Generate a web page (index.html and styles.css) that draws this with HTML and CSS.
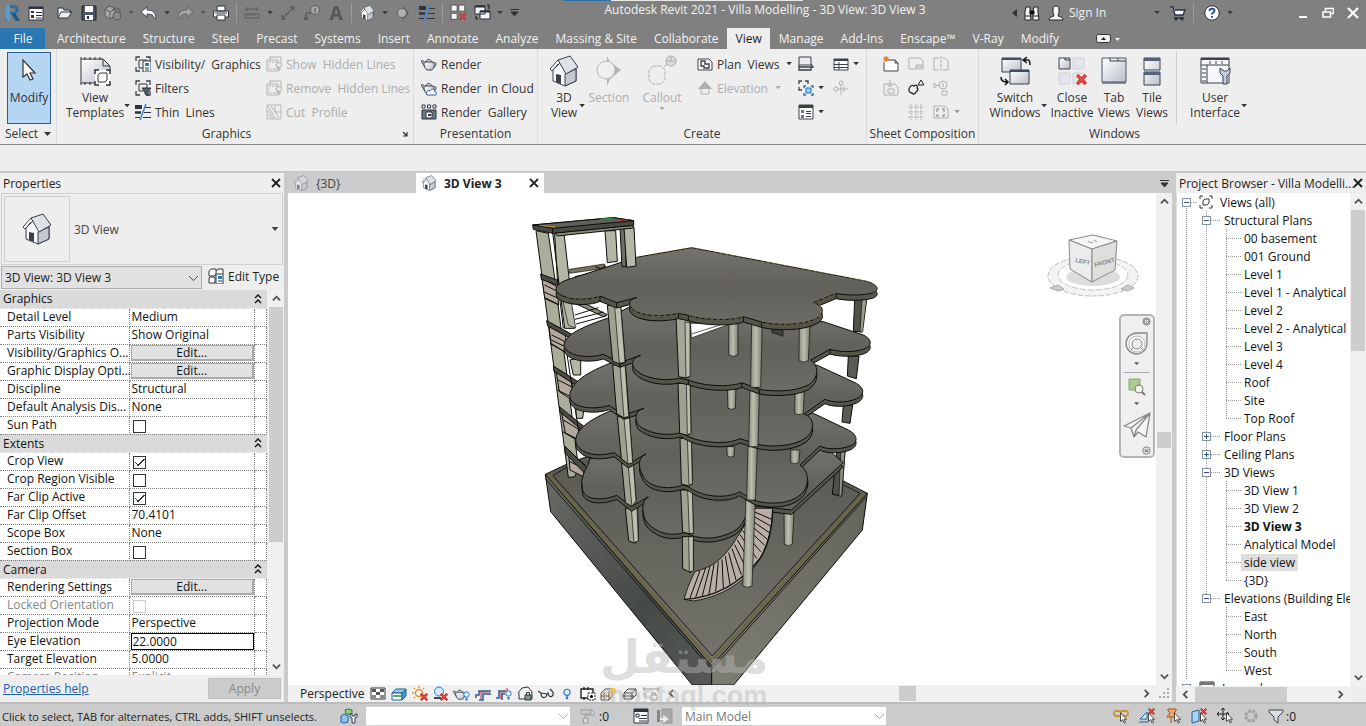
FILE: index.html
```html
<!DOCTYPE html>
<html lang="en">
<head>
<meta charset="utf-8">
<title>Autodesk Revit 2021 - Villa Modelling - 3D View: 3D View 3</title>
<link rel="stylesheet" href="styles.css">
</head>
<body>
<svg class="defs" width="0" height="0" aria-hidden="true">
  <defs>
    <linearGradient id="g-metal" x1="0" y1="0" x2="1" y2="1"><stop offset="0" stop-color="#fff"/><stop offset="1" stop-color="#b9bfca"/></linearGradient>
    <linearGradient id="g-slab" x1="0" y1="0" x2="0" y2="1"><stop offset="0" stop-color="#74736e"/><stop offset=".5" stop-color="#62605b"/><stop offset="1" stop-color="#6c6b66"/></linearGradient>
    <linearGradient id="g-floor" x1="0" y1="0" x2="0" y2="1"><stop offset="0" stop-color="#575650"/><stop offset="1" stop-color="#75746c"/></linearGradient>
    <linearGradient id="g-left" x1="0" y1="0" x2="1" y2="1"><stop offset="0" stop-color="#686a66"/><stop offset=".6" stop-color="#464a46"/><stop offset="1" stop-color="#565955"/></linearGradient>
    <linearGradient id="g-right" x1="1" y1="0" x2="0" y2="1"><stop offset="0" stop-color="#65645c"/><stop offset="1" stop-color="#7e7d72"/></linearGradient>
    <linearGradient id="g-cyl" x1="0" y1="0" x2="1" y2="0"><stop offset="0" stop-color="#8b8e7f"/><stop offset=".45" stop-color="#bcbfae"/><stop offset="1" stop-color="#7d8072"/></linearGradient>
    <symbol id="i-house" viewBox="0 0 30 32">
      <path d="M4 15v11l12 5 11-5V13L16 3z" fill="#fafafa" stroke="#3b404a"/>
      <path d="M16 19v12l11-5V14z" fill="#c3c8d1" stroke="#3b404a"/>
      <path d="M7 19l5 1v9l-5-2z" fill="#3b404a"/>
      <path d="M9 5l12-4 8 11-12 7z" fill="#dfe2e8" stroke="#3b404a" stroke-linejoin="round"/>
      <path d="M9 5L1 14l2 2 6-7" fill="#fff" stroke="#3b404a" stroke-linejoin="round"/>
    </symbol>
    <symbol id="i-crop" viewBox="0 0 16 16"><path d="M1 5V1h4M11 1h4v4M15 11v4h-4M5 15H1v-4" fill="none" stroke="#3b404a" stroke-width="1.3"/></symbol>
    <symbol id="i-thin" viewBox="0 0 16 16"><path d="M0 3h7" stroke="#2d3440" stroke-width="4"/><path d="M0 8.500h6" stroke="#2d3440" stroke-width="2.500"/><path d="M0 13.500h5M10 3.500h6M9 8.500h7M8 13.500h8" stroke="#2d3440" stroke-width="1.200"/><path d="M11 0L5 16" stroke="#3e84d8" stroke-width="1.500"/></symbol>
    <symbol id="i-hidden" viewBox="0 0 16 16"><path d="M1 4h11v11H1zM4 4V1h11v8" fill="none" stroke="#b4b4b4"/><path d="M3 6h7v7H3z" fill="none" stroke="#b4b4b4" stroke-dasharray="2 1"/><circle cx="13" cy="9" r="2.500" fill="#eee" stroke="#b4b4b4"/><path d="M12 11h2v3h-2z" fill="#ccc" stroke="#b4b4b4"/></symbol>
    <symbol id="i-teapot" viewBox="0 0 16 16"><path d="M3 6h9c2 3 1 6-1 8H6C3 12 3 9 3 6z" fill="url(#g-metal)" stroke="#3b404a"/><path d="M4 11L0 5h3M12 7c4-2 4 3 0 5M5 6c0-3 5-3 6 0M7.500 3v1" fill="none" stroke="#3b404a"/></symbol>
    <symbol id="i-windows" viewBox="0 0 32 32"><path d="M3 3h19v14H3z" fill="url(#g-metal)" stroke="#3b404a"/><path d="M3 3h19v2H3z" fill="#3b5068"/><path d="M11 15h19v14H11z" fill="url(#g-metal)" stroke="#3b404a"/><path d="M11 15h19v2H11z" fill="#3b5068"/><path d="M25 5h4q2 0 2 5M28 2l-4 3 4 3M2 22q0 5 6 5M6 24l3 3-3 3" fill="none" stroke="#111" stroke-width="1.500"/></symbol>
    <symbol id="i-redx" viewBox="0 0 10 10"><path d="M1 1l8 8M9 1L1 9" stroke="#c22a22" stroke-width="3"/><path d="M1.500 1.500l7 7M8.500 1.500l-7 7" stroke="#ee5a50" stroke-width="1.200"/></symbol>
    <symbol id="i-tiles" viewBox="0 0 32 32"><path d="M3 3h11v11H3z" fill="url(#g-metal)" stroke="#3b404a"/><path d="M9 3v2h5" stroke="#3b404a" fill="none"/><path d="M17 3h11v11H17zM3 18h11v11H3zM17 18h11v11H17z" fill="#e3e5ea" stroke="#cfd3da"/><use href="#i-redx" x="20" y="19" width="11" height="11"/></symbol>
    <symbol id="i-tri" viewBox="0 0 8 5"><path d="M0 0h7L3.500 4z" fill="currentColor"/></symbol>
    <symbol id="i-up" viewBox="0 0 10 10"><path d="M1 7l4-4 4 4" fill="none" stroke="#505050" stroke-width="2"/></symbol>
    <symbol id="i-down" viewBox="0 0 10 10"><path d="M1 3l4 4 4-4" fill="none" stroke="#505050" stroke-width="2"/></symbol>
    <symbol id="i-left" viewBox="0 0 10 10"><path d="M7 1L3 5l4 4" fill="none" stroke="#505050" stroke-width="2"/></symbol>
    <symbol id="i-right" viewBox="0 0 10 10"><path d="M3 1l4 4-4 4" fill="none" stroke="#505050" stroke-width="2"/></symbol>
    <symbol id="i-close" viewBox="0 0 10 10"><path d="M1 1l8 8M9 1L1 9" stroke="currentColor" stroke-width="1.800"/></symbol>
    <symbol id="i-cursor" viewBox="0 0 9 14"><path d="M1 1v10l2.500-2 2 4 1.500-1-2-3.500h3z" fill="#fff" stroke="#333"/></symbol>
    <symbol id="i-bulb" viewBox="0 0 7 10"><circle cx="3.500" cy="3.500" r="2.700" fill="#dff0ff" stroke="#2a78c2"/><path d="M2.500 7h2v2.500h-2z" fill="#2a78c2"/></symbol>
    <symbol id="i-fold" viewBox="0 0 8 10"><path d="M1 4l3-3 3 3M1 9l3-3 3 3" fill="none" stroke="#111" stroke-width="1.400"/></symbol>
  </defs>
</svg>

<header class="titlebar">
  <div class="qat-row">
    <div class="qat">
      <button class="q" aria-label="Revit"><svg width="18" height="18" viewBox="0 0 18 18"><path d="M3 1h8c6 0 6 8 1 9l4 7h-4L8 10H6v7H3l-1-3z" fill="#2f6ea5"/><path d="M3 1h4v16H4l-2-4z" fill="#5b9bd0"/><path d="M7 4h4c2 0 2 4 0 4H7z" fill="#808080"/><path d="M9 10l5 7h3l-5-8z" fill="#1b5388"/></svg></button>
      <button class="q" aria-label="Properties"><svg width="16" height="16"><path d="M1 2h14v13H1z" fill="#fff" stroke="#2d3440"/><path d="M1 2h14v2H1z" fill="#2d3440"/><path d="M3 6h3v2H3zM3 10h3v3H3z" fill="#2d3440"/><path d="M8 7.500h6M8 10.500h6M8 13h6" stroke="#2d3440"/></svg></button>
      <button class="q after-gap" aria-label="Open"><svg width="16" height="16"><path d="M1 12V3h5l1 2h6v3M1 13l3-6h11l-4 6z" fill="#eef0f4" stroke="#2d3440"/></svg></button>
      <button class="q" aria-label="Save"><svg width="16" height="16"><path d="M1 1h14v14H1z" fill="#4a5568" stroke="#222"/><path d="M4 1h8v6H4zM4 10h8v5H4z" fill="#fff"/><path d="M6 11h2v3H6z" fill="#2d3440"/></svg></button>
      <button class="q" aria-label="Synchronize"><svg width="18" height="16"><path d="M1 4l5-3 5 3v7l-5 3-5-3z" fill="#a5a5a5" stroke="#5c5c5c"/><path d="M1 4l5 3 5-3M6 7v7M8 5l4-2 4 2v5l-4 3" fill="none" stroke="#5c5c5c"/><circle cx="13" cy="11" r="4" fill="#8c8c8c" stroke="#5c5c5c"/></svg></button>
      <button class="qa dim" aria-label="Sync options"><svg width="7" height="4"><use href="#i-tri"/></svg></button>
      <button class="q" aria-label="Undo"><svg width="16" height="16"><path d="M0 7l6-5v3c6 0 9 3 9 9l-2-1c0-3-3-4-7-4v3z" fill="#fff" stroke="#2d3440" stroke-width=".8"/></svg></button>
      <button class="qa" aria-label="Undo list"><svg width="7" height="4"><use href="#i-tri"/></svg></button>
      <button class="q" aria-label="Redo"><svg width="16" height="16"><path d="M16 7l-6-5v3C4 5 1 8 1 14l2-1c0-3 3-4 7-4v3z" fill="#a8a8a8" stroke="#5c5c5c" stroke-width=".8"/></svg></button>
      <button class="qa dim" aria-label="Redo list"><svg width="7" height="4"><use href="#i-tri"/></svg></button>
      <button class="q" aria-label="Print"><svg width="16" height="16"><path d="M4 1h8v5H4zM0.500 6h15v6h-15z" fill="#fff" stroke="#2d3440"/><path d="M4 10h8v5H4z" fill="#fff" stroke="#2d3440"/><path d="M2 8h12" stroke="#2d3440"/></svg></button>
      <i class="qsep"></i>
      <button class="q" aria-label="Measure"><svg width="16" height="16"><path d="M1 4h14M3 2v4M13 2v4M1 9h14v4H1zM4 9v2M7 9v2M10 9v2" fill="none" stroke="#5c5c5c"/></svg></button>
      <button class="qa" aria-label="Measure options"><svg width="7" height="4"><use href="#i-tri"/></svg></button>
      <button class="q" aria-label="Aligned dimension"><svg width="16" height="16"><path d="M2 14L14 2M10 2h4v4M2 10v4h4" fill="none" stroke="#5c5c5c" stroke-width="1.300"/></svg></button>
      <button class="q" aria-label="Tag"><svg width="16" height="16"><circle cx="11" cy="5" r="4.500" fill="#a8a8a8" stroke="#5c5c5c"/><path d="M11 3v5M7 8H2v4" fill="none" stroke="#4c4c4c"/><path d="M0 12h4v3H0z" fill="#5c5c5c"/></svg></button>
      <button class="q letter" aria-label="Text">A</button>
      <i class="qsep"></i>
      <button class="q" aria-label="Default 3D view"><svg width="16" height="16"><use href="#i-house"/></svg></button>
      <button class="qa" aria-label="3D options"><svg width="7" height="4"><use href="#i-tri"/></svg></button>
      <button class="q" aria-label="Section"><svg width="16" height="16"><path d="M8 1l6 7-6 7z" fill="#5c5c5c"/><circle cx="7" cy="8" r="4.500" fill="#b0b0b0" stroke="#666"/></svg></button>
      <button class="q" aria-label="Thin lines"><svg width="16" height="16"><use href="#i-thin"/></svg></button>
      <i class="qsep"></i>
      <button class="q" aria-label="Close inactive views"><svg width="17" height="17" viewBox="1 1 31 31"><path d="M3 3h11v11H3zM17 3h11v11H17zM3 18h11v11H3z" fill="#f4f4f8" stroke="#444" stroke-width="1.500"/><use href="#i-redx" x="17" y="17" width="14" height="14"/></svg></button>
      <button class="q" aria-label="Switch windows"><svg width="17" height="17"><path d="M1 2h10v8H1zM6 7h10v8H6z" fill="#f4f4f8" stroke="#26303c"/><path d="M1 2.500h10M6 7.500h10" stroke="#26303c" stroke-width="2"/><path d="M13 1h2v4M2 12v3h2" fill="none" stroke="#111"/></svg></button>
      <button class="qa" aria-label="Window list"><svg width="7" height="4"><use href="#i-tri"/></svg></button>
      <button class="qa custom" aria-label="Customize"><svg width="9" height="7"><path d="M0 .5h9M1 3h7L4.500 7z" stroke="#333" fill="#333"/></svg></button>
    </div>
    <div class="app-title">Autodesk Revit 2021 - Villa Modelling - 3D View: 3D View 3</div>
    <div class="account">
      <button class="qa" aria-label="Collapse search"><svg width="5" height="8"><path d="M5 0v8L0 4z" fill="#333"/></svg></button>
      <button class="q" aria-label="Search"><svg width="16" height="16"><path d="M2 2h4v4l1 9H1V7zM10 2h4v5l1 8H9V6z" fill="#f2f2f2" stroke="#222"/><path d="M6 6h4v3H6zM1 11h6M9 11h6" stroke="#222"/></svg></button>
      <button class="signin"><svg width="16" height="16"><path d="M1 15c0-3 3-3 5-4l-1-3V4c0-4 6-4 6 0v4l-1 3c2 1 5 1 5 4z" fill="#f7f7f7" stroke="#222"/></svg><span>Sign In</span></button>
      <button class="qa" aria-label="Account menu"><svg width="7" height="4"><use href="#i-tri"/></svg></button>
      <button class="q cart" aria-label="App store"><svg width="17" height="16"><path d="M0 2h3l2 8h8l2-5H5M4 13h10" fill="#fff" stroke="#26304a" stroke-width="1.400"/><circle cx="6" cy="14" r="1.500" fill="#26304a"/><circle cx="12" cy="14" r="1.500" fill="#26304a"/></svg></button>
      <i class="qsep"></i>
      <button class="q help" aria-label="Help"><svg width="16" height="16"><circle cx="8" cy="8" r="7.200" fill="#fff" stroke="#333"/><path d="M5.500 6c0-3 5-3 5-.3C10.500 7.500 8 7.500 8 9.500M8 11v1.800" fill="none" stroke="#27509b" stroke-width="2"/></svg></button>
      <button class="qa" aria-label="Help menu"><svg width="7" height="4"><use href="#i-tri"/></svg></button>
      <div class="wm">
        <button aria-label="Minimize"><svg width="12" height="12"><path d="M2 10h8" stroke="#fff" stroke-width="2"/></svg></button>
        <button aria-label="Restore"><svg width="12" height="12"><path d="M3.500 4V1.500h8v5H9M1 5h7.500v5H1z" fill="none" stroke="#fff" stroke-width="1.500"/></svg></button>
        <button aria-label="Close"><svg width="12" height="12"><path d="M1 1l10 10M11 1L1 11" stroke="#fff" stroke-width="2.200"/></svg></button>
      </div>
    </div>
  </div>
  <nav class="tabs">
    <button class="tab file">File</button>
    <button class="tab">Architecture</button><button class="tab">Structure</button><button class="tab">Steel</button><button class="tab">Precast</button><button class="tab">Systems</button><button class="tab">Insert</button><button class="tab">Annotate</button><button class="tab">Analyze</button><button class="tab">Massing &amp; Site</button><button class="tab">Collaborate</button><button class="tab active">View</button><button class="tab">Manage</button><button class="tab">Add-Ins</button><button class="tab">Enscape™</button><button class="tab">V-Ray</button><button class="tab">Modify</button>
    <button class="tab mini" aria-label="Minimize ribbon"><svg width="26" height="10"><rect x=".5" y=".5" width="14" height="8" rx="2" fill="#f0f0f0" stroke="#333"/><path d="M5 6h5L7.500 3z" fill="#222"/><path d="M19 4h5l-2.500 3z" fill="#eee"/></svg></button>
  </nav>
</header>

<section class="ribbon" aria-label="View ribbon">
  <div class="panel p-select">
    <div class="body"><button class="big modify"><svg width="32" height="32"><path d="M10 5v17l4-3 3 6 3-1-3-6h5z" fill="#fff" stroke="#333" stroke-width="1.200"/></svg><span>Modify</span></button></div>
    <div class="name">Select <svg width="7" height="4"><path d="M0 0h7L3.500 4z" fill="#333"/></svg></div>
  </div>
  <div class="panel p-graphics">
    <div class="body">
      <button class="big"><svg width="32" height="32"><path d="M2 4h22l7 7v17H2z" fill="url(#g-metal)"/><path d="M2 2v28M2 4h22l7 7v5M24 4v7h7M2 28h13M6 2v3M11 2v3M16 2v3M21 2v3M6 27v3M11 27v3" fill="none" stroke="#333"/><path d="M16 15h15v15H16z" fill="#fff"/><path d="M16 19v-4h4M27 15h4v4M31 26v4h-4M20 30h-4v-4" fill="none" stroke="#333" stroke-width="1.500"/><path d="M19 20l2-2h7v7l-2 2h-7z" fill="#fff" stroke="#333"/></svg><span>View<br>Templates</span></button>
      <svg class="drop" width="7" height="4"><use href="#i-tri"/></svg>
      <div class="col">
        <button class="sm"><svg width="16" height="16"><use href="#i-crop"/><path d="M4 4h8v8H4z" fill="none" stroke="#333"/><path d="M8 5h8v11H8z" fill="#fff" stroke="#26384f"/><path d="M10 7h4v3h-4z" fill="#2a78c2"/><path d="M10 12h4M10 14h4" stroke="#26384f"/></svg>Visibility/&nbsp; Graphics</button>
        <button class="sm"><svg width="16" height="16"><use href="#i-crop"/><path d="M4 4h8v7H4z" fill="none" stroke="#333"/><path d="M7 8h9l-3 4v4l-3-2v-2z" fill="#59616e" stroke="#2d3440"/></svg>Filters</button>
        <button class="sm"><svg width="16" height="16"><use href="#i-thin"/></svg>Thin&nbsp; Lines</button>
      </div>
      <div class="col">
        <button class="sm" disabled><svg width="16" height="16"><use href="#i-hidden"/></svg>Show&nbsp; Hidden Lines</button>
        <button class="sm" disabled><svg width="16" height="16"><use href="#i-hidden"/></svg>Remove&nbsp; Hidden Lines</button>
        <button class="sm" disabled><svg width="16" height="16"><path d="M1 1h14v14H1z" fill="none" stroke="#b8b8b8"/><path d="M9 1v7h6M2 2l7 12M2 6l5 8M2 10l3 4M5 2l8 12" fill="none" stroke="#b8b8b8"/></svg>Cut&nbsp; Profile</button>
      </div>
    </div>
    <div class="name launcher"><span>Graphics</span><svg width="6" height="6"><path d="M1 1l4 4M5 1v4H1" fill="none" stroke="#333" stroke-width="1.200"/></svg></div>
  </div>
  <div class="panel p-present">
    <div class="body"><div class="col">
      <button class="sm"><svg width="16" height="16"><use href="#i-teapot"/></svg>Render</button>
      <button class="sm"><svg width="16" height="16"><use href="#i-teapot"/><path d="M6 15c-2-3 1-5 3-4 1-3 5-2 5 1 3 0 2 3 0 3z" fill="#fff" stroke="#2a5ca8"/></svg>Render&nbsp; in Cloud</button>
      <button class="sm"><svg width="16" height="16"><path d="M1 6h14v9H1z" fill="#6d7686" stroke="#2d3440"/><path d="M5 8h6v6H5z" fill="#fff" stroke="#2d3440"/><path d="M7 10h3v2H7z" fill="#2d3440"/><path d="M1 1h3v3H1zM6.500 1h3v3h-3zM12 1h3v3h-3z" fill="#fff" stroke="#2d3440"/></svg>Render&nbsp; Gallery</button>
    </div></div>
    <div class="name">Presentation</div>
  </div>
  <div class="panel p-create">
    <div class="body">
      <button class="big w36"><svg width="32" height="32"><use href="#i-house"/></svg><span>3D<br>View</span></button>
      <svg class="drop" width="7" height="4"><use href="#i-tri"/></svg>
      <button class="big w46" disabled><svg width="32" height="32"><path d="M14 1v30l3-7 11-9L17 7z" fill="#b5b5b5"/><circle cx="13" cy="15" r="9" fill="#efefef" stroke="#b5b5b5"/></svg><span>Section</span></button>
      <button class="big w46" disabled><svg width="32" height="32"><path d="M7 11h8l4 4v10l-4 4H7l-4-4V15z" fill="none" stroke="#b0b0b0" stroke-dasharray="4 1"/><path d="M18 12l3-3" stroke="#b0b0b0"/><circle cx="25" cy="6" r="5" fill="#ddd" stroke="#aaa"/><path d="M20 6h10M25 2v4" stroke="#aaa"/></svg><span>Callout</span><svg class="under" width="7" height="4"><use href="#i-tri"/></svg></button>
      <div class="col plans">
        <button class="sm"><svg width="16" height="16"><path d="M1 3h11l3 3v8H1z" fill="#fff" stroke="#3b404a"/><path d="M4 5h4v3h4v4H7v-2H4z" fill="none" stroke="#3b404a" stroke-width="1.400"/></svg>Plan&nbsp; Views<svg class="tri" width="7" height="4"><use href="#i-tri"/></svg></button>
        <button class="sm" disabled><svg width="16" height="16"><path d="M8 1l7 8H1z" fill="#b0b0b0"/><path d="M4 9v5h8V9" fill="#eee" stroke="#b0b0b0"/></svg>Elevation<svg class="tri" width="7" height="4"><use href="#i-tri"/></svg></button>
      </div>
      <div class="col icons c-a">
        <button class="sm" aria-label="Drafting view"><svg width="16" height="16"><path d="M1 1h12v8H1z" fill="#e9ebf0" stroke="#3b404a"/><path d="M1 9v5h12v-3M1 11h14l-2-3" fill="none" stroke="#3b404a" stroke-width="1.300"/></svg></button>
        <button class="sm" aria-label="Duplicate view"><svg width="16" height="16"><path d="M1 4V1h3M7 1h3v3M1 7v3h3" fill="none" stroke="#3b404a" stroke-width="1.300"/><path d="M8 8h5v5H8z" fill="#9ed0f5" stroke="#1d6fb8"/><path d="M6 8V6h2M13 6h2v2M15 13v2h-2M8 15H6v-2" fill="none" stroke="#1d6fb8" stroke-width="1.300"/></svg><svg class="tri" width="7" height="4"><use href="#i-tri"/></svg></button>
        <button class="sm" aria-label="Legends"><svg width="16" height="16"><path d="M1 1h14v14H1z" fill="#fff" stroke="#3b404a"/><path d="M1 1h14v3H1z" fill="#3b404a"/><path d="M3 6h3v3H3zM3 11h3v3H3z" fill="#6d7686"/><path d="M8 7.500h5M8 9.500h5M8 12.500h5" stroke="#3b404a"/></svg><svg class="tri" width="7" height="4"><use href="#i-tri"/></svg></button>
      </div>
      <div class="col icons">
        <button class="sm" aria-label="Schedules"><svg width="16" height="16"><path d="M1 3h14v11H1z" fill="#fff" stroke="#3b404a"/><path d="M1 3h14v2H1z" fill="#3b404a"/><path d="M1 8.500h14M1 11.500h14M6 6v8" stroke="#3b404a"/></svg><svg class="tri" width="7" height="4"><use href="#i-tri"/></svg></button>
        <button class="sm" disabled aria-label="Scope box"><svg width="16" height="16"><circle cx="8" cy="3" r="2" fill="none" stroke="#b0b0b0"/><circle cx="3" cy="9" r="2" fill="none" stroke="#b0b0b0"/><path d="M8 5v10M5 9h10M11 6v6" stroke="#b0b0b0"/></svg></button>
      </div>
    </div>
    <div class="name">Create</div>
  </div>
  <div class="panel p-sheet">
    <div class="body"><div class="iconsgrid">
      <button aria-label="Sheet"><svg width="16" height="16"><path d="M3 4h9l3 3v8H1V6" fill="#fff" stroke="#3b404a"/><path d="M12 4v3h3" fill="none" stroke="#3b404a"/><path d="M3 0v6M0 3h6M1 1l4 4M5 1L1 5" stroke="#e0832a" stroke-width="1.200"/></svg></button>
      <button disabled aria-label="Title block"><svg width="16" height="16"><path d="M1 2h11l3 3v8H1zM8 9h7M8 9v4M8 11h7" fill="none" stroke="#b0b0b0"/></svg></button>
      <button disabled aria-label="Matchline"><svg width="16" height="16"><path d="M6 2H1v12h5M10 2h2l3 3v9h-5" fill="none" stroke="#b0b0b0"/><path d="M8 0v16" stroke="#b0b0b0" stroke-dasharray="3 1"/></svg></button>
      <span></span>
      <button disabled aria-label="Place view"><svg width="16" height="16"><path d="M1 4h11l3 3v8H1z" fill="none" stroke="#b0b0b0"/><path d="M5 9h6v4H5zM7 0v6M4 4l3 3 3-3" fill="none" stroke="#b0b0b0"/></svg></button>
      <button aria-label="Revisions"><svg width="16" height="16"><path d="M2 7c2-3 3-1 4-1 2-2 4 0 3 2 2 2 0 3-1 4-1 3-4 2-4 1-3 0-4-3-2-6z" fill="none" stroke="#222" stroke-width="1.300"/><path d="M10 5l3-5 3 5z" fill="none" stroke="#222"/></svg></button>
      <button disabled aria-label="View reference"><svg width="16" height="16"><circle cx="10" cy="5" r="4" fill="none" stroke="#b0b0b0"/><path d="M10 3v4M0 4h3v3H0zM3 5.500h3M9 11h5v4H9z" fill="none" stroke="#b0b0b0"/></svg></button>
      <span></span>
      <span></span>
      <button disabled aria-label="Guide grid"><svg width="16" height="16"><path d="M0 3h16M0 8h16M0 13h16M3 0v16M8 0v16M13 0v16" stroke="#b0b0b0" stroke-dasharray="2 1"/></svg></button>
      <button disabled aria-label="Viewports"><svg width="16" height="16"><path d="M1 2h11l3 3v9H1z" fill="none" stroke="#b0b0b0"/><path d="M4 8V5h2M9 5h2v3M11 10v2H9M6 12H4v-2" fill="none" stroke="#a0a0a0" stroke-width="1.400"/></svg></button>
      <svg class="vpdrop" width="7" height="4"><use href="#i-tri"/></svg>
    </div></div>
    <div class="name">Sheet Composition</div>
  </div>
  <div class="panel p-windows">
    <div class="body">
      <button class="big w52"><svg width="32" height="32"><use href="#i-windows"/></svg><span>Switch<br>Windows</span></button>
      <svg class="drop" width="7" height="4"><use href="#i-tri"/></svg>
      <button class="big w46"><svg width="32" height="32"><use href="#i-tiles"/></svg><span>Close<br>Inactive</span></button>
      <button class="big w38"><svg width="32" height="32"><path d="M4 5h24v24H4z" fill="#8b93a2"/><path d="M4 3h24v24H4z" fill="url(#g-metal)" stroke="#4b5568"/><path d="M12 3v3h16M20 3v3" fill="none" stroke="#3b404a"/></svg><span>Tab<br>Views</span></button>
      <button class="big w38"><svg width="32" height="32"><path d="M8 3h16v12H8zM8 17h16v13H8z" fill="url(#g-metal)" stroke="#3b404a"/><path d="M8 3h16v3H8zM8 17h16v3H8z" fill="#55637a"/></svg><span>Tile<br>Views</span></button>
      <i class="vsep"></i>
      <button class="big w52"><svg width="32" height="32"><path d="M2 3h28v25H2z" fill="#f7f7f9" stroke="#3b404a"/><path d="M2 3h28v2H2z" fill="#3b404a"/><path d="M2 10h28M11 6v3M17 6v3M23 6v3M8 10v18M3 14h4M3 18h4M3 22h4M3 26h4" stroke="#3b404a"/><path d="M23 13v5l3 3v8h4v-8l3-3v-5l-3 3h-3z" transform="translate(-2)" fill="#c4ccd8" stroke="#33435a"/></svg><span>User<br>Interface</span></button>
      <svg class="drop" width="7" height="4"><use href="#i-tri"/></svg>
    </div>
    <div class="name">Windows</div>
  </div>
</section>
<div class="optionsbar"></div>

<main class="work">
  <aside class="props">
    <div class="dock-title"><h2>Properties</h2><button aria-label="Close Properties"><svg width="10" height="10"><use href="#i-close"/></svg></button></div>
    <div class="type">
      <div class="thumb"><svg width="32" height="32"><use href="#i-house"/></svg></div>
      <span>3D View</span>
      <svg width="9" height="5"><use href="#i-tri"/></svg>
    </div>
    <div class="instance">
      <select aria-label="Instance"><option>3D View: 3D View 3</option></select>
      <button class="edit-type"><svg width="16" height="16"><path d="M1 3l2-2h5v5L6 8H1zM8 3l2-2h5v5l-2 2M1 10l1-1h5v6H1z" fill="#fff" stroke="#333"/><path d="M8 6h7v10H8z" fill="#fff" stroke="#26384f"/><path d="M10 8h4v3h-4z" fill="#2a78c2"/><path d="M10 13h4" stroke="#26384f"/></svg>Edit Type</button>
    </div>
    <div class="gridwrap">
      <div class="gridclip">
      <table class="pgrid">
        <colgroup><col class="c-name"><col class="c-val"><col class="c-lock"></colgroup>
        <tbody>
        <tr class="sec"><th colspan="3"><div>Graphics<svg width="8" height="10"><use href="#i-fold"/></svg></div></th></tr>
        <tr><td>Detail Level</td><td>Medium</td><td></td></tr>
        <tr><td>Parts Visibility</td><td>Show Original</td><td></td></tr>
        <tr><td>Visibility/Graphics O...</td><td><button>Edit...</button></td><td></td></tr>
        <tr><td>Graphic Display Opti...</td><td><button>Edit...</button></td><td></td></tr>
        <tr><td>Discipline</td><td>Structural</td><td></td></tr>
        <tr><td>Default Analysis Dis...</td><td>None</td><td></td></tr>
        <tr><td><label for="sun">Sun Path</label></td><td><input id="sun" type="checkbox"></td><td></td></tr>
        <tr class="sec"><th colspan="3"><div>Extents<svg width="8" height="10"><use href="#i-fold"/></svg></div></th></tr>
        <tr><td><label for="crop">Crop View</label></td><td><input id="crop" type="checkbox" checked></td><td></td></tr>
        <tr><td><label for="cropv">Crop Region Visible</label></td><td><input id="cropv" type="checkbox"></td><td></td></tr>
        <tr><td><label for="far">Far Clip Active</label></td><td><input id="far" type="checkbox" checked></td><td></td></tr>
        <tr><td>Far Clip Offset</td><td>70.4101</td><td></td></tr>
        <tr><td>Scope Box</td><td>None</td><td></td></tr>
        <tr><td><label for="secb">Section Box</label></td><td><input id="secb" type="checkbox"></td><td></td></tr>
        <tr class="sec"><th colspan="3"><div>Camera<svg width="8" height="10"><use href="#i-fold"/></svg></div></th></tr>
        <tr><td>Rendering Settings</td><td><button>Edit...</button></td><td></td></tr>
        <tr class="off"><td><label for="lock">Locked Orientation</label></td><td><input id="lock" type="checkbox" disabled></td><td></td></tr>
        <tr><td>Projection Mode</td><td>Perspective</td><td></td></tr>
        <tr><td><label for="eye">Eye Elevation</label></td><td><input id="eye" type="text" value="22.0000"></td><td></td></tr>
        <tr><td>Target Elevation</td><td>5.0000</td><td></td></tr>
        <tr class="off"><td>Camera Position</td><td>Explicit</td><td></td></tr>
        </tbody>
      </table>
      </div>
      <div class="vscroll"><button aria-label="Scroll up"><svg width="9" height="9"><use href="#i-up"/></svg></button><i class="thumb-v long"></i><button class="end" aria-label="Scroll down"><svg width="9" height="9"><use href="#i-down"/></svg></button></div>
    </div>
    <div class="props-foot"><a href="#">Properties help</a><button disabled>Apply</button></div>
  </aside>

  <section class="view">
    <div class="viewtabs">
      <button class="vt"><svg class="faded" width="16" height="16"><use href="#i-house"/></svg><span>{3D}</span></button>
      <button class="vt on"><svg width="16" height="16"><use href="#i-house"/></svg><span>3D View 3</span><svg class="x" width="10" height="10"><use href="#i-close"/></svg></button>
      <button class="more" aria-label="More views"><svg width="9" height="7"><path d="M0 .5h9M1 3h7L4.500 7z" stroke="#333" fill="#333"/></svg></button>
    </div>
    <div class="canvasrow">
      <div class="canvas">
        <svg class="model" viewBox="288 193 868 492" role="img" aria-label="Villa structural model">
          <g transform="translate(520 200) scale(.33333)" stroke="#0c0c0a" stroke-width="3" stroke-linejoin="round">
            <path d="M76 823L150 788 400 700H800L970 843 1042 880 575 1400z" fill="url(#g-floor)"/>
            <path d="M76 823L575 1398V1455H517L92 935z" fill="url(#g-left)"/>
            <path d="M1042 880L1027 990 641 1455H575V1398z" fill="url(#g-right)"/>
            <path d="M84 824L575 1384 1034 881" fill="none" stroke="#6c6742" stroke-width="8"/>
            <path d="M100 828L577 1368 1020 880 965 852M76 836L575 1408 1040 890M150 796l-50 30" fill="none" stroke-width="2.500"/>
            <!-- ground storey columns -->
            <path d="M950 755h25l-10 133-28-5z" fill="#4d4f49"/><path d="M962 755h13l-10 133h-8z" fill="#8f9184" stroke-width="2"/>
            <path d="M792 935h30l-5 98q-12 8-24 0z" fill="url(#g-cyl)" stroke-width="2"/>
            <path d="M620 1000h18v10q-9 5-18 0z" fill="url(#g-cyl)" stroke-width="1"/>
            <!-- stair tower -->
            <g>
              <path d="M48 92l37 8 20 140 70 560-10 30-20 2z" fill="#a9ad9a"/>
              <path d="M66 235l45 25 5 55-42-20zM86 370l50 30 5 60-48-30zM108 510l50 35 5 60-45-30zM125 640l55 40 8 50-52-30zM145 750l50 45-5 35-40-20z" fill="#b3a79e"/>
              <path d="M72 292l45 22M92 432l45 25M112 570l50 25M128 695l50 25M150 785l40 20M74 255l40 20M95 405l45 22M115 540l48 25M130 660l50 30M70 275l45 20M90 418l45 22" fill="none" stroke-width="3"/>
              <path d="M62 222l88 32-20 8-66-24zM80 362l85 46-12 8-70-38zM100 498l85 54-14 6-69-44zM118 620l82 66-14 4-66-54zM134 738l76 74-14 10-60-62z" fill="#4b4b44"/>
              <path d="M98 98l34 2 16 140 16 145h-30zM150 480l32-10v55h-22z" fill="#b3b7a5"/>
              <path d="M104 102l8 135 18 148M136 430l26 170 16 110" fill="none"/>
              <path d="M165 600l28 15-5 40h-18z" fill="#b3b7a5"/>
            </g>
            <path d="M316 925h37l2 97-12 8-17-8z" fill="#9fa291"/><path d="M334 925l8 103 13-6-4-100z" fill="#bcbfae" stroke-width="2"/>
            <!-- floor 1 -->
            <path d="M185 855C188 830 205 810 210 788L400 740H900L970 800 815 943 700 930 680 955C665 1000 640 1012 590 1024 555 1030 520 1024 495 1010 440 1028 390 1000 375 970 365 945 365 915 385 902L335 934 290 898C250 914 200 914 188 884z" fill="#56554b"/>
            <path d="M185 843C188 818 205 798 210 776L400 728H900L970 788 815 930 700 917 680 942C665 987 640 1000 590 1012 555 1018 520 1012 495 997 440 1015 390 987 375 957 365 932 365 902 385 890L335 920 290 886C250 902 200 902 188 872z" fill="url(#g-slab)"/>
            <path d="M487 1010h33l1 100-8 8-25-12z" fill="#9fa291"/><path d="M506 1010l2 105 12-2v-103z" fill="#bcbfae" stroke-width="2"/>
            <path d="M493 1198C500 1165 515 1135 525 1115 580 1100 610 1075 640 1030 665 990 685 960 705 925H758C758 960 752 1000 735 1045 710 1110 640 1185 520 1203z" fill="#b9aea6" stroke-width="2.500"/>
            <path d="M510 1194L540 1112M527 1192L557 1104M547 1187L570 1098M567 1182L582 1092M587 1175L595 1085M610 1165L606 1078M630 1154L616 1068M648 1140L626 1058M664 1124L636 1046M680 1108L644 1034M694 1092L652 1020M710 1075L660 1004M722 1055L668 992M734 1036L675 980M742 1018L682 968M748 998L688 957M752 978L695 946M755 958L702 935" stroke-width="3"/>
            <path d="M493 1198Q630 1190 720 1075 756 1020 758 930" fill="none" stroke-width="4"/>
            <path d="M305 790h35l8 112-12 18-20-12z" fill="#9fa291"/><path d="M324 790h16l8 112-12 18z" fill="#bcbfae" stroke-width="2"/>
            <path d="M482 870h34l4 130-10 2-22-6z" fill="#9fa291"/><path d="M503 870h14l3 130h-12z" fill="#bcbfae" stroke-width="2"/>
            <path d="M810 755h30l-4 35q-13 6-24 0z" fill="url(#g-cyl)" stroke-width="2"/>
            <path d="M678 900h28l-10 258q-14 8-28 0z" fill="url(#g-cyl)" stroke-width="2"/>
            <!-- floor 2 -->
            <path d="M970 615h28l-8 55-24-4z" fill="#5a5c54"/>
            <path d="M168 727C172 702 200 672 290 637L380 622 880 652 985 702C1015 717 1015 740 990 750 960 762 915 760 900 750L840 807 860 830C868 850 862 870 850 887 820 927 740 927 700 912L658 887C630 907 550 907 508 874L490 867C450 882 390 877 370 842 352 812 355 782 378 774L325 804 282 770C250 780 200 780 180 757 168 747 166 737 168 727z" fill="#56554b"/>
            <path d="M168 715C172 690 200 660 290 625L380 610 880 640 985 690C1015 705 1015 728 990 738 960 750 915 748 900 738L840 795C865 810 870 850 850 875 820 915 740 915 700 900L658 875C630 895 550 895 508 862L490 855C450 870 390 865 370 830 352 800 355 770 378 762L325 792 282 758C250 768 200 768 180 745 168 735 166 725 168 715z" fill="url(#g-slab)"/>
            <path d="M292 650h36l10 138-14 4-20-16z" fill="#9fa291"/><path d="M312 655l12 137 14-4-10-138z" fill="#bcbfae" stroke-width="2"/>
            <path d="M480 715h34l3 135-10 8-23-6z" fill="#9fa291"/><path d="M502 715h12l3 138h-10z" fill="#bcbfae" stroke-width="2"/>
            <path d="M620 740h24l-2 28q-11 6-20 0z" fill="url(#g-cyl)" stroke-width="2"/>
            <path d="M684 740h28l-6 160h-26z" fill="url(#g-cyl)" stroke-width="2"/>
            <path d="M812 750h28l-4 38q-12 6-24 0z" fill="url(#g-cyl)" stroke-width="2"/>
            <!-- floor 3 -->
            <path d="M985 468h32l-8 68-27-8z" fill="#5a5c54"/>
            <path d="M150 595C155 568 180 538 270 503L340 483 890 508 1005 561C1035 575 1035 598 1010 609 980 623 935 621 915 611L852 655C885 668 885 703 860 725 820 755 745 755 710 745L660 729C630 745 560 745 510 725L483 711C430 725 380 708 358 691 340 673 345 643 372 638L312 658 267 629C235 641 185 638 165 625 150 613 148 605 150 595z" fill="#56554b"/>
            <path d="M150 582C155 555 180 525 270 490L340 470 890 495 1005 548C1035 562 1035 585 1010 596 980 610 935 608 915 598L852 642C885 655 885 690 860 712 820 742 745 742 710 732L660 716C630 732 560 732 510 712L483 698C430 712 380 695 358 678 340 660 345 630 372 625L312 645 267 616C235 628 185 625 165 612 150 600 148 592 150 582z" fill="url(#g-slab)"/>
            <path d="M278 495h38l12 158-18 0-20-12z" fill="#9fa291"/><path d="M300 495l12 158 14-4-11-158z" fill="#bcbfae" stroke-width="2"/>
            <path d="M474 550h36l3 148-10 8-24-6z" fill="#9fa291"/><path d="M499 550h11l3 152h-11z" fill="#bcbfae" stroke-width="2"/>
            <path d="M622 565h26l-2 60q-12 6-22 0z" fill="url(#g-cyl)" stroke-width="2"/>
            <path d="M690 570h28l-4 170h-28z" fill="url(#g-cyl)" stroke-width="2"/>
            <path d="M825 575h28l-3 66q-13 6-26 0z" fill="url(#g-cyl)" stroke-width="2"/>
            <!-- floor 4 -->
            <path d="M1004 298l36-2-14 100-26-2z" fill="#4f514a"/><path d="M1026 298h14l-12 98h-8z" fill="#9a9c8d" stroke-width="2"/>
            <path d="M132 449C135 424 165 402 262 369L330 334 910 379 1030 419C1060 434 1055 454 1030 462 1000 472 955 470 930 462L872 494C900 514 895 549 865 569 820 592 750 588 718 582L665 562C640 574 560 576 505 554L478 549C430 559 375 549 350 526 330 509 335 486 362 480L300 502 250 477C215 488 170 484 150 472 137 464 132 456 132 449z" fill="#56554b"/>
            <path d="M132 435C135 410 165 388 262 355L330 320 910 365 1030 405C1060 420 1055 440 1030 448 1000 458 955 456 930 448L872 480C900 500 895 535 865 555 820 578 750 574 718 568L665 548C640 560 560 562 505 540L478 535C430 545 375 535 350 512 330 495 335 472 362 466L300 488 250 463C215 474 170 470 150 458 137 450 132 442 132 435z" fill="url(#g-slab)"/>
            <path d="M262 316h40l14 172-16 5-22-10z" fill="#9fa291"/><path d="M284 318l14 172 17-4-13-168z" fill="#bcbfae" stroke-width="2"/>
            <path d="M468 350h42l-2 180-10 4-22-4z" fill="#a4a796"/><path d="M495 365l3 168 12-4v-160z" fill="#bcbfae" stroke-width="2"/>
            <path d="M512 370l120 0-8 4-110 40z" fill="#fff" stroke-width="2"/><path d="M515 402l95-30" fill="none" stroke-width="2"/><path d="M757 385l-2 12 24 8 10 4v-20z" fill="#3f3f3a" stroke-width="2"/>
            <path d="M626 370h28v95q-14 8-28 0z" fill="url(#g-cyl)" stroke-width="2"/>
            <path d="M695 360h32l-5 202h-30z" fill="url(#g-cyl)" stroke-width="2"/>
            <path d="M838 375h32l-5 107q-14 8-28 0z" fill="url(#g-cyl)" stroke-width="2"/>
            <path d="M150 300l110 20v20l-90 30z" fill="#fff" stroke="none"/>
            <path d="M128 300h25l14 84-22-8z" fill="#b3b7a5" stroke-width="2"/>
            <path d="M165 310l85 40 12-6-60-30zM165 345l70-22M165 358l85-22M168 372l90-24" fill="#8b8b7a" stroke-width="3"/>
            <!-- roof -->
            <path d="M255 92h32l5 92-30 4z" fill="#b3b7a5"/>
            <path d="M148 212l110-20 35 12-110 30z" fill="#fff" stroke="none"/>
            <path d="M148 208l105-16 6 12-110 16z" fill="#77755f" stroke-width="2"/>
            <path d="M165 230l90-20M225 200l40 12M235 212l20-14" fill="none"/>
            <path d="M108 281C112 266 135 256 165 248L350 188 515 159 1045 261C1080 274 1075 288 1060 294 1030 304 975 302 948 296L880 324C915 334 915 358 890 371 850 394 760 392 725 382L670 366C640 378 550 378 505 362L475 356C430 366 370 366 340 346 322 331 325 314 350 309L290 324 240 304C215 316 165 316 140 308 115 301 108 291 108 281z" fill="#56554b"/>
            <path d="M108 265C112 250 135 240 165 232L350 172 515 143 1045 245C1080 258 1075 272 1060 278 1030 288 975 286 948 280L880 308C915 318 915 342 890 355 850 378 760 376 725 366L670 350C640 362 550 362 505 346L475 340C430 350 370 350 340 330 322 315 325 298 350 293L290 308 240 288C215 300 165 300 140 292 115 285 108 275 108 265z" fill="url(#g-slab)"/>
            <path d="M350 172L515 143 1045 245C1080 258 1075 272 1060 278M948 280L880 308C915 318 915 342 890 355 850 378 760 376 725 366M670 350C640 362 550 362 505 346M475 340C430 350 370 350 340 330M240 288C215 300 165 300 140 292" fill="none" stroke="#94803a" stroke-width="2" stroke-dasharray="9 9"/>
            <path d="M290 308v14M240 288v14M475 340v16M505 346v16M670 350v16M725 366v16M948 280v14M300 488v14M505 540v14M665 548v14M718 568v14M930 448v14" fill="none"/>
            <path d="M631 217h2M640 296h2" stroke="#7a2020"/>
            <path d="M300 82l18 2v116h-12z" fill="#6d7065"/><path d="M312 82h30l6 116-28 4z" fill="#b3b7a5"/>
            <path d="M105 98L340 76v8L112 108z" fill="#87897c"/>
            <path d="M38 75L280 53 341 62V76L98 100 40 88z" fill="#4a4a42"/>
            <path d="M38 75L280 53 341 62 98 85z" fill="#62605b"/><path d="M98 85v15"/>
            <path d="M240 58l40-4" stroke="#2f9b3c"/><path d="M60 76l45 5" stroke="#c58a3c"/><path d="M300 62l25-2" stroke="#a33"/>
          </g>
        </svg>
        <svg class="cube" width="94" height="66" viewBox="1046 232 94 66" aria-label="View cube" role="img">
          <ellipse cx="1093" cy="276" rx="45" ry="20" fill="#f3f3f3" stroke="#bbb" stroke-dasharray="5 2"/>
          <ellipse cx="1093" cy="275" rx="35" ry="15" fill="#fff" stroke="#c4c4c4" stroke-dasharray="6 2"/>
          <ellipse cx="1093" cy="277" rx="27" ry="9" fill="#ddd"/>
          <path d="M1069 240L1093 235 1117 241 1092 249z" fill="#f6f6f6" stroke="#888"/>
          <path d="M1069 240L1092 249V282L1070 269z" fill="#ececec" stroke="#888"/>
          <path d="M1117 241L1092 249V282L1115 270z" fill="#dedede" stroke="#888"/>
          <path d="M1050 288l8-3 6 4-6 2zM1121 289l7-4 6 3-6 3z" fill="#ccc" stroke="#aaa"/>
          <text class="cubetext" x="1075" y="262" transform="rotate(12 1075 262)">LEFT</text>
          <text class="cubetext" x="1095" y="267" transform="rotate(-15 1095 267)">FRONT</text>
          <path d="M1088 241l3 2 2-1M1094 240l3 2" stroke="#999" fill="none"/>
        </svg>
        <div class="navbar">
          <button class="nx" aria-label="Close navigation bar"><svg width="9" height="9"><circle cx="4.500" cy="4.500" r="4" fill="#999"/><path d="M3 3l3 3M6 3L3 6" stroke="#fff"/></svg></button>
          <button aria-label="Steering wheel"><svg width="24" height="24"><path d="M12 1h10v11A10.500 10.500 0 1 1 12 1z" fill="#eee" stroke="#888" stroke-width="1.300"/><circle cx="12" cy="12" r="8" fill="#fafafa" stroke="#bbb"/><circle cx="12" cy="12" r="5" fill="#eee" stroke="#888"/><path d="M6 18l3-3M18 18l-3-3" stroke="#888"/></svg></button>
          <svg class="t" width="6" height="4"><use href="#i-tri"/></svg>
          <i></i>
          <button aria-label="Zoom region"><svg width="18" height="18"><path d="M1 1h11v11H1z" fill="#aacb93" stroke="#83a86c"/><circle cx="11" cy="11" r="4" fill="#f4f4f4" stroke="#777"/><path d="M14 14l3 3" stroke="#777" stroke-width="2"/></svg></button>
          <svg class="t" width="6" height="4"><use href="#i-tri"/></svg>
          <button aria-label="Fly"><svg width="28" height="28"><path d="M27 1L1 14l7 2 3 9 4-5 8 5zM27 1L8 16M27 1L13 18l-2 7" fill="#f4f4f4" stroke="#888" stroke-linejoin="round" stroke-width="1.300"/></svg></button>
          <button class="nx" aria-label="Navigation options"><svg width="9" height="9"><circle cx="4.500" cy="4.500" r="3.700" fill="#ddd" stroke="#888"/><path d="M2.500 4h4M3 5.500h3" stroke="#777"/></svg></button>
        </div>
      </div>
      <div class="vscroll"><button aria-label="Scroll up"><svg width="9" height="9"><use href="#i-up"/></svg></button><i class="thumb-v mid"></i><button class="end" aria-label="Scroll down"><svg width="9" height="9"><use href="#i-down"/></svg></button></div>
    </div>
    <div class="viewbar">
      <span>Perspective</span>
      <div class="vb">
        <button aria-label="Detail level"><svg width="16" height="13"><path d="M1 1h14v11H1z" fill="#fff" stroke="#333"/><path d="M2 2h4v3H2zM10 2h4v3h-4zM6 5h4v3H6z" fill="#555"/><path d="M2 8h4v3H2zM10 8h4v3h-4z" fill="#888"/></svg></button>
        <button aria-label="Visual style"><svg width="16" height="14"><path d="M1 6l4-4h10l-4 4z" fill="#8ed0f0" stroke="#1f5f94"/><path d="M1 6h10v7H1z" fill="#fff" stroke="#1f5f94"/><path d="M11 6l4-4v7l-4 4z" fill="#4b9ad0" stroke="#1f5f94"/><path d="M2 9h8" stroke="#58b25c" stroke-width="2"/></svg></button>
        <button aria-label="Sun path"><svg width="16" height="15"><circle cx="7" cy="7" r="3.500" fill="#fff" stroke="#e0932a" stroke-width="1.500"/><path d="M7 0v2M0 7h2M2 2l1 1M12 2l-1 1M2 12l1-1" stroke="#e0932a" stroke-width="1.400"/><use href="#i-redx" x="8" y="7" width="8" height="8"/></svg></button>
        <button aria-label="Shadows"><svg width="16" height="15"><circle cx="6" cy="5.500" r="4.500" fill="#d6ebfa" stroke="#2a78c2"/><path d="M1 12h7" stroke="#444" stroke-width="2"/><use href="#i-redx" x="7" y="7" width="8" height="8"/></svg></button>
        <button aria-label="Rendering dialog"><svg width="18" height="14"><use href="#i-teapot" width="14" height="14"/><use href="#i-bulb" x="10" y="4" width="7" height="10"/></svg></button>
        <button aria-label="Crop view"><svg width="16" height="14"><path d="M1 11V8h3V4h12M16 7H8v6H4" fill="none" stroke="#2a5c9c" stroke-width="1.500"/><path d="M6 13V5h9" fill="none" stroke="#b33"/></svg></button>
        <button aria-label="Crop region"><svg width="16" height="14"><path d="M0 11h3V4h7M6 13V7h3" fill="none" stroke="#2a5c9c" stroke-width="1.500"/><path d="M5 12V5h4M11 1v3" fill="none" stroke="#b33"/><use href="#i-bulb" x="9" y="3" width="7" height="10"/></svg></button>
        <button aria-label="Locked 3D view"><svg width="16" height="15"><path d="M1 7l4-5 6-1 4 5v7H2V7" fill="#eef0f4" stroke="#333"/><path d="M8 9h6v5H8z" fill="#7d9a93" stroke="#333"/><path d="M9.500 9V6.500h3V9" fill="none" stroke="#333"/></svg></button>
        <button aria-label="Temporary hide"><svg width="16" height="14"><path d="M0 4l3 2c0 6 5 6 6 1l1-1c1 6 6 4 5-1l-3-3M3 6l6 1" fill="#eaf3fa" stroke="#333" stroke-width="1.200"/></svg></button>
        <button aria-label="Reveal hidden"><svg width="8" height="12"><use href="#i-bulb"/></svg></button>
        <button aria-label="Worksharing display"><svg width="16" height="14"><path d="M1 2h12v9H1zM4 0v3M8 0v3M4 10v3" fill="#fff" stroke="#222" stroke-width="1.400"/><path d="M8 6h7v7H8z" fill="#fff" stroke="#222" stroke-dasharray="2 1"/><circle cx="11.500" cy="9.500" r="1.500"/></svg></button>
        <button aria-label="Temporary view properties"><svg width="17" height="14"><path d="M1 6l4-4h7v7l-3 4H1zM1 9h8M4 5v8M9 4v9" fill="#f3e4e0" stroke="#654"/><circle cx="13" cy="4" r="3" fill="#f5c34a"/></svg></button>
        <button aria-label="Analytical model"><svg width="15" height="14"><path d="M2 6l4-4h8v6l-4 4H2zM2 6h8v6M10 6l4-4M0 9h12" fill="#eee" stroke="#444"/></svg></button>
        <button aria-label="Constraints"><svg width="16" height="14"><path d="M0 2h16M1 0v4M15 0v4M2 6v6" stroke="#999"/><path d="M8 8h6v5H8zM9.500 8V6h3v2" fill="none" stroke="#999"/></svg></button>
        <button aria-label="Scroll left"><svg width="9" height="9"><use href="#i-left"/></svg></button>
      </div>
      <i class="thumb-h"></i>
      <button class="sr" aria-label="Scroll right"><svg width="9" height="9"><use href="#i-right"/></svg></button>
      <svg class="grip" width="11" height="11"><path d="M8 1h2M8 5h2M8 9h2M4 5h2M4 9h2M0 9h2" stroke="#aaa" stroke-width="2"/></svg>
    </div>
    <div class="mark" aria-hidden="true"><b lang="ar" dir="rtl">مستقل</b><em>mostaql.com</em></div>
  </section>

  <aside class="browser">
    <div class="dock-title"><h2>Project Browser - Villa Modelli...</h2><button aria-label="Close Project Browser"><svg width="10" height="10"><use href="#i-close"/></svg></button></div>
    <div class="treewrap">
      <div class="treeclip">
        <ul class="tree">
          <li class="root"><div class="row"><i class="box"></i><i class="dash"></i><svg width="14" height="14"><path d="M1 4V1h3M10 1h3v3M13 10v3h-3M4 13H1v-3" fill="none" stroke="#333"/><path d="M4 6l2-2h4v4l-2 2H4z" fill="none" stroke="#333"/></svg><span>Views (all)</span></div>
            <ul class="l2">
              <li><div class="row"><i class="box"></i><i class="dash"></i><span>Structural Plans</span></div>
                <ul class="l3"><li>00 basement</li><li>001 Ground</li><li>Level 1</li><li>Level 1 - Analytical</li><li>Level 2</li><li>Level 2 - Analytical</li><li>Level 3</li><li>Level 4</li><li>Roof</li><li>Site</li><li>Top Roof</li></ul></li>
              <li><div class="row"><i class="box plus"></i><i class="dash"></i><span>Floor Plans</span></div></li>
              <li><div class="row"><i class="box plus"></i><i class="dash"></i><span>Ceiling Plans</span></div></li>
              <li><div class="row"><i class="box"></i><i class="dash"></i><span>3D Views</span></div>
                <ul class="l3"><li>3D View 1</li><li>3D View 2</li><li><b>3D View 3</b></li><li>Analytical Model</li><li><mark>side view</mark></li><li>{3D}</li></ul></li>
              <li><div class="row"><i class="box"></i><i class="dash"></i><span>Elevations (Building Elevation)</span></div>
                <ul class="l3"><li>East</li><li>North</li><li>South</li><li>West</li></ul></li>
            </ul>
          </li>
          <li class="root"><div class="row"><i class="box plus"></i><i class="dash"></i><svg width="16" height="14"><path d="M1 1h14v12H1z" fill="#fff" stroke="#333"/><path d="M1 1h14v3H1z" fill="#777"/><path d="M3 7h4M9 7h4" stroke="#333"/></svg><span>Legends</span></div></li>
        </ul>
      </div>
      <div class="vscroll"><button aria-label="Scroll up"><svg width="9" height="9"><use href="#i-up"/></svg></button><i class="thumb-v tall"></i><button class="end" aria-label="Scroll down"><svg width="9" height="9"><use href="#i-down"/></svg></button></div>
    </div>
    <div class="hscroll"><button aria-label="Scroll left"><svg width="9" height="9"><use href="#i-left"/></svg></button><i></i><button class="end" aria-label="Scroll right"><svg width="9" height="9"><use href="#i-right"/></svg></button></div>
  </aside>
</main>

<footer class="status">
  <span class="msg">Click to select, TAB for alternates, CTRL adds, SHIFT unselects.</span>
  <svg width="18" height="16"><path d="M5 2l3-1 4 1v4H6z" fill="#8ecf7a" stroke="#3a7a35"/><path d="M1 8l3-2 4 2v6l-4 1-3-1z" fill="#8cc4ee" stroke="#2a5c9c"/><path d="M10 6v3l2 1v5h3v-5l2-1V6h-2v2h-3V6z" fill="#eee" stroke="#33435a"/></svg>
  <select class="cb ws" aria-label="Active workset"><option></option></select>
  <svg class="g1" width="16" height="16"><path d="M2 2h11l2 2v3H6v3M2 2v4h10V2M5 10h4v5H4z" fill="#ddd" stroke="#999"/></svg><span class="cnt">:0</span>
  <svg class="g2" width="16" height="16"><path d="M1 1h14v14H1z" fill="#fff" stroke="#2d3440"/><path d="M1 1h14v3H1z" fill="#2d3440"/><path d="M3 6h3v3H3zM8 7.500h6M6 10.500h8M6 13h8" stroke="#2d3440" fill="none"/></svg>
  <svg class="g3" width="16" height="16"><path d="M5 1h10v14H5z" fill="#aaa" stroke="#999"/><path d="M0 11h9M6 8l4 3-4 3" fill="none" stroke="#eee" stroke-width="2"/><path d="M0 2h3v12H0z" fill="#888"/></svg>
  <select class="cb dm" aria-label="Design option"><option>Main Model</option></select>
  <div class="sel">
    <button aria-label="Select links"><svg width="17" height="16"><rect x="1" y="3" width="7" height="5" rx="2" fill="none" stroke="#c9962a" stroke-width="1.800"/><rect x="8" y="3" width="7" height="5" rx="2" fill="none" stroke="#c9962a" stroke-width="1.800"/><use href="#i-cursor" x="6" y="4" width="9" height="12"/></svg></button>
    <button aria-label="Select underlay"><svg width="17" height="16"><path d="M1 11l7-7v7zM0 14h9" fill="#cfe8fa" stroke="#2a5c9c"/><use href="#i-redx" x="9" y="0" width="7" height="7"/><use href="#i-cursor" x="8" y="4" width="9" height="12"/></svg></button>
    <button aria-label="Select pinned"><svg width="17" height="16"><path d="M3 1h8v2L9 5l3 4H2l3-4-2-2zM6 9v6" fill="#efa36b" stroke="#a8551c"/><use href="#i-cursor" x="8" y="4" width="9" height="12"/></svg></button>
    <button aria-label="Select by face"><svg width="17" height="16"><path d="M1 4l7-2v11l-7 2z" fill="#a7d5f3" stroke="#2a5c9c"/><use href="#i-redx" x="9" y="0" width="7" height="7"/><use href="#i-cursor" x="8" y="4" width="9" height="12"/></svg></button>
    <button aria-label="Drag on selection"><svg width="17" height="16"><path d="M6 0v12M0 6h12M4 2l2-2 2 2M4 10l2 2 2-2M2 4L0 6l2 2M10 4l2 2-2 2" fill="none" stroke="#222"/><use href="#i-cursor" x="8" y="4" width="9" height="12"/></svg></button>
    <button aria-label="Background processes"><svg width="16" height="16"><circle cx="8" cy="8" r="5" fill="none" stroke="#a2a2a2" stroke-width="3" stroke-dasharray="3 1"/></svg></button>
    <button aria-label="Filter"><svg width="16" height="16"><path d="M1 2h14v2L10 9v6l-4-3V9L1 4z" fill="#d9dde4" stroke="#444"/></svg></button><span>:0</span>
  </div>
</footer>
</body>
</html>
```

FILE: styles.css
```css
* { box-sizing: border-box; }
html, body { height: 100%; }
body {
  margin: 0;
  display: flex;
  flex-direction: column;
  overflow: hidden;
  background: #cbcbcb;
  color: #1e1e1e;
  font: 12px/15px "Open Sans", "Noto Sans", sans-serif;
}
button, input, select { font: inherit; color: inherit; }
button { border: 0; padding: 0; background: none; display: inline-flex; align-items: center; justify-content: center; }
svg { flex: none; display: block; }
h2 { margin: 0; font: inherit; }
ul { list-style: none; margin: 0; padding: 0; }
.defs { position: absolute; }

/* title bar */
.titlebar {
  flex: none;
  background:
    linear-gradient(#2f6ea5, #2f6ea5) 563px 0 / 48px 1px no-repeat,
    linear-gradient(#e8e8e8, #e8e8e8) 611px 0 / 192px 1px no-repeat,
    #808080;
  color: #f2f2f2;
}
.qat-row { display: flex; height: 28px; }
.qat, .account { display: flex; align-items: center; height: 25px; }
.q { width: 24px; height: 24px; }
.qa { width: 12px; height: 24px; color: #3a3a3a; }
.qa.dim { color: #5a5a5a; }
.qa.custom { width: 16px; }
.after-gap { margin-left: 5px; }
.letter { font: bold 19px/24px "Open Sans", sans-serif; color: #555; }
.qsep { width: 1px; height: 20px; margin: 0 3px; background: #999; }
.app-title { flex: 1; text-align: center; white-space: nowrap; line-height: 20px; }
.account { width: 358px; }
.signin { gap: 5px; margin-left: 4px; }
.signin + .qa { margin-left: auto; }
.cart { margin-left: 3px; }
.help { margin-left: 3px; }
.wm { display: flex; gap: 13px; margin: 0 7px 0 61px; }
.tabs { display: flex; height: 21px; }
.tab { padding: 0 8px 0 9px; white-space: nowrap; }
.tab.file { width: 45px; margin-right: 3px; background: #2a77b4; }
.tab.active { background: #eee; color: #1e1e1e; }
.tab.mini { margin-left: 20px; }

/* ribbon */
.ribbon { flex: none; display: flex; background: #eee; border-bottom: 1px solid #8a8a8a; color: #333; }
.panel { display: flex; flex-direction: column; border-right: 1px solid #dcdcdc; height: 95px; }
.panel .body { display: flex; height: 76px; padding-top: 3px; }
.panel .name { display: flex; align-items: center; justify-content: center; gap: 6px; height: 17px; white-space: nowrap; }
.launcher span { flex: 1; text-align: center; }
.launcher svg { margin-right: 5px; }
.p-select { width: 57px; }
.p-select .body { padding-left: 7px; }
.p-graphics { width: 357px; }
.p-graphics .body { padding-left: 9px; }
.p-present { width: 124px; }
.p-present .body { padding-left: 7px; }
.p-create { width: 329px; }
.p-create .body { padding-left: 8px; }
.p-sheet { width: 112px; }
.p-sheet .body { padding-left: 12px; }
.p-windows { width: 271px; border: 0; }
.p-windows .body { padding-left: 10px; }
.big { flex-direction: column; justify-content: flex-start; flex: none; width: 58px; padding-top: 3px; line-height: 15px; text-align: center; }
.big > span { margin-top: 3px; }
.big .under { margin-top: 2px; }
.modify { width: 44px; height: 72px; background: #b5d6f3; border: 1px solid #2b5f93; padding-top: 2px; }
.w36 { width: 36px; } .w38 { width: 38px; } .w46 { width: 46px; } .w52 { width: 52px; }
.p-create .w46 { margin-right: 7px; }
.drop { margin-top: 52px; }
.col { display: flex; flex-direction: column; }
.sm { height: 24px; gap: 4px; justify-content: flex-start; white-space: nowrap; }
.tri { margin-left: 3px; }
.icons .tri { margin-left: 0; }
.p-graphics .drop { margin-right: 4px; }
.p-graphics .col { width: 131px; }
.p-create .col { margin-right: 5px; }
.p-create .plans { margin-left: 5px; }
.p-create .c-a { margin-right: 7px; }
.p-create .drop { margin-left: -3px; }
.p-create .icons { width: 28px; }
button:disabled { color: #adadad; }
.iconsgrid { display: grid; grid-template-columns: 25px 25px 25px 10px; grid-auto-rows: 24px; }
.iconsgrid button { justify-content: flex-start; padding-left: 4px; }
.iconsgrid .vpdrop { align-self: center; color: #999; }
.p-windows .drop { margin-right: 1px; }
.vsep { width: 1px; height: 72px; margin: 0 12px 0 5px; background: #ccc; }
.optionsbar { flex: none; height: 27px; background: #eee; border-bottom: 1px solid #c4c4c4; }

/* docked panels */
.work { flex: 1; min-height: 0; display: grid; grid-template-columns: 284px minmax(0, 1fr) 190px; column-gap: 4px; padding-top: 1px; }
.dock-title { flex: none; display: flex; align-items: center; justify-content: space-between; height: 20px; padding: 0 3px; white-space: nowrap; }
.props, .browser { display: flex; flex-direction: column; min-height: 0; background: #eee; }
.type { flex: none; display: flex; align-items: center; height: 72px; margin: 0 1px; padding: 2px; border: 1px solid #d0d0d0; gap: 4px; color: #444; }
.type .thumb { width: 66px; height: 66px; display: grid; place-items: center; border: 1px solid #d0d0d0; }
.type span { flex: 1; }
.instance { flex: none; display: flex; height: 25px; padding: 1px 0 0 1px; gap: 6px; }
.instance select, .cb { appearance: none; border: 1px solid #adadad; border-radius: 0; padding: 0 4px; }
.instance select {
  width: 201px; height: 23px; padding: 0 3px;
  background:
    linear-gradient(45deg, transparent 42%, #555 42% 58%, transparent 58%) 187px 9px / 5px 5px no-repeat,
    linear-gradient(-45deg, transparent 42%, #555 42% 58%, transparent 58%) 191px 9px / 5px 5px no-repeat,
    #e1e1e1;
}
.edit-type { height: 20px; gap: 4px; }
.gridwrap { flex: 1; min-height: 0; display: flex; gap: 1px; }
.gridclip { flex: 1; min-width: 0; overflow: hidden; background: #fff; }
.pgrid { width: 100%; border-collapse: collapse; table-layout: fixed; color: #111; }
.c-name { width: 129px; } .c-lock { width: 12px; }
.pgrid td, .pgrid th { height: 18px; padding: 0 2px 2px; line-height: 15px; white-space: nowrap; border-bottom: 1px dotted #808080; font-weight: normal; text-align: left; }
.pgrid td { border-right: 1px dotted #808080; }
.pgrid td:first-child { padding-left: 7px; padding-right: 0; }
.pgrid th { background: #dadada; border-bottom-color: #dadada; padding: 0 5px 0 3px; }
.pgrid th div { display: flex; justify-content: space-between; align-items: center; height: 16px; }
.pgrid button { display: flex; width: 100%; height: 16px; line-height: 14px; background: #e1e1e1; border: 1px solid #aaa; border-width: 1px 2px 2px 1px; }
.pgrid input[type=checkbox] { appearance: none; display: block; width: 13px; height: 13px; margin: 2px 0 0 1px; border: 1px solid #333; background: #fff; }
.pgrid input[type=checkbox]:checked { background:
    linear-gradient(45deg, transparent 42%, #333 42% 56%, transparent 56%) 1px 5px / 4px 4px no-repeat,
    linear-gradient(-45deg, transparent 44%, #333 44% 56%, transparent 56%) 3px 2px / 8px 7px no-repeat, #fff; }
.pgrid input[type=checkbox]:disabled { border-color: #ccc; }
.pgrid input[type=text] { display: block; width: 100%; height: 17px; margin: 0; padding: 0 1px; border: 1px solid #000; outline: 0; }
.pgrid td:has(input[type=checkbox]) { padding-bottom: 0; }
.pgrid td:has(input[type=text]), .pgrid td:has(button) { padding: 0 0 0 1px; }
.off { color: #858585; }
.props-foot { flex: none; display: flex; align-items: center; justify-content: space-between; height: 27px; padding: 0 3px; }
.props-foot a { color: #1a5fb4; }
.props-foot button { width: 73px; height: 21px; background: #ccc; border: 1px solid #bfbfbf; color: #888; }

/* scroll bars */
.vscroll { flex: none; width: 16px; display: flex; flex-direction: column; align-items: center; background: #f0f0f0; }
.vscroll button { width: 16px; height: 17px; }
.vscroll .end { margin-top: auto; }
.thumb-v { width: 14px; background: #cdcdcd; }
.thumb-v.long { height: 61%; }
.thumb-v.mid { height: 16px; margin-top: 222px; }
.thumb-v.tall { height: 141px; }
.hscroll { flex: none; height: 16px; display: flex; align-items: center; background: #f0f0f0; margin-right: 16px; }
.hscroll button { width: 19px; }
.hscroll i { width: 92px; height: 15px; background: #cdcdcd; }
.hscroll .end { margin-left: auto; }

/* drawing area */
.view { position: relative; display: flex; flex-direction: column; min-height: 0; }
.viewtabs { flex: none; display: flex; height: 20px; color: #444; }
.vt { width: 128px; justify-content: flex-start; padding: 0 5px; gap: 7px; }
.vt.on { background: #fff; font-weight: bold; color: #222; }
.vt .x { margin-left: auto; }
.faded { opacity: .55; }
.more { margin-left: auto; width: 16px; }
.canvasrow { flex: 1; min-height: 0; display: flex; background: #fff; }
.canvas { position: relative; flex: 1; min-width: 0; background: #fff; }
.model { width: 100%; height: 100%; }
.cube { position: absolute; top: 39px; right: 16px; }
.cubetext { font: bold 6px "Liberation Sans", sans-serif; fill: #888; stroke: none; }
.navbar { position: absolute; top: 121px; right: 1px; width: 36px; height: 144px; display: flex; flex-direction: column; align-items: center; justify-content: space-between; padding: 1px 2px; border: 2px solid #b4b4b4; border-radius: 5px; background: #efefef; color: #666; }
.navbar i { width: 26px; height: 1px; background: #aaa; }
.nx { align-self: flex-end; }
.viewbar { flex: none; display: flex; align-items: center; height: 17px; padding-left: 12px; background: #f0f0f0; color: #222; }
.viewbar span { width: 67px; }
.vb { display: flex; }
.vb button { width: 21px; height: 16px; }
.thumb-h { width: 17px; height: 15px; margin-left: 217px; background: #cdcdcd; }
.sr { margin-left: auto; margin-right: 8px; }
.grip { margin-right: 2px; }
.mark { position: absolute; right: 403px; bottom: -6px; width: 170px; display: flex; flex-direction: column; align-items: center; color: #b8b8b8; opacity: .45; pointer-events: none; }
.mark b { font: bold 46px/54px "DejaVu Sans", sans-serif; }
.mark em { font: bold 27px/24px "Liberation Sans", sans-serif; }

/* project browser */
.browser .dock-title button { margin-left: -4px; }
.treewrap { flex: 1; min-height: 0; display: flex; }
.treeclip { flex: 1; min-width: 0; overflow: hidden; background: #fff; border-left: 1px solid #ddd; }
.tree { --dots: repeating-linear-gradient(#999 0 1px, transparent 1px 2px); color: #111; }
.tree .row, .l3 li { display: flex; align-items: center; height: 18px; white-space: nowrap; }
.root { padding-left: 5px; background: var(--dots) 9px 9px / 1px 100% no-repeat; }
.root svg { margin-right: 7px; }
.box { flex: none; width: 9px; height: 9px; border: 1px solid #8592a6; background: linear-gradient(#35507c, #35507c) center / 5px 1px no-repeat, #fff; }
.box.plus { background: linear-gradient(#35507c, #35507c) center / 5px 1px no-repeat, linear-gradient(#35507c, #35507c) center / 1px 5px no-repeat, #fff; }
.dash { flex: none; width: 9px; height: 1px; margin-right: 4px; background: repeating-linear-gradient(90deg, #999 0 1px, transparent 1px 2px); }
.root > .row > .dash { width: 6px; margin-right: 2px; }
.l2 > li { margin-left: 20px; background: var(--dots) 4px 0 / 1px 100% no-repeat; }
.l2 > li:last-child { background-size: 1px 9px; }
.l3 { padding-left: 24px; }
.l3 li { padding-left: 18px; background: var(--dots) 0 0 / 1px 100% no-repeat, repeating-linear-gradient(90deg, #999 0 1px, transparent 1px 2px) 0 9px / 15px 1px no-repeat; }
.l3 li:last-child { background-size: 1px 9px, 15px 1px; }
mark { background: #dedede; color: inherit; margin-left: -3px; padding: 1px 3px; }

/* status bar */
.status { flex: none; display: flex; align-items: center; height: 24px; padding: 2px 0 0 2px; border-top: 2px solid #bcbcbc; background: #cbcbcb; white-space: nowrap; }
.msg { width: 338px; font-size: 11px; }
.cb { width: 204px; height: 18px; border-color: #fff; color: #777; padding: 0 2px;
  background:
    linear-gradient(45deg, transparent 42%, #aaa 42% 58%, transparent 58%) 192px 6px / 5px 5px no-repeat,
    linear-gradient(-45deg, transparent 42%, #aaa 42% 58%, transparent 58%) 196px 6px / 5px 5px no-repeat,
    #fff; }
.ws { margin-left: 8px; }
.g1 { margin-left: 9px; }
.cnt { width: 34px; margin-left: 4px; }
.g3 { margin: 0 9px 0 8px; }
.sel { display: flex; align-items: center; margin-left: auto; width: 253px; gap: 9px; }
.sel span { margin-left: -7px; }
```
